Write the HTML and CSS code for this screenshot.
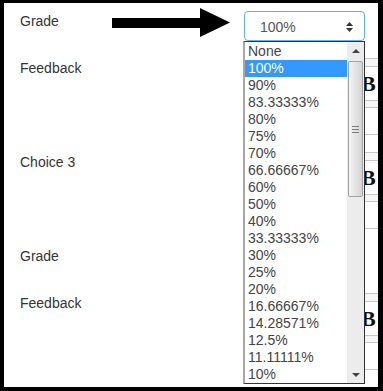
FILE: index.html
```html
<!DOCTYPE html>
<html>
<head>
<meta charset="utf-8">
<link rel="stylesheet" href="styles.css">
</head>
<body>
<div class="frame">
  <div class="form">
    <div class="label">Grade</div>
    <div class="field">
      <div class="select">
        <span class="select-value">100%</span>
        <svg class="updown" width="7" height="10" viewBox="0 0 7 10"><polygon points="0,4 3.5,0 7,4" fill="#333"/><polygon points="0,6 7,6 3.5,10" fill="#333"/></svg>
      </div>
    </div>

    <div class="label">Feedback</div>
    <div class="field">
      <div class="editor">
        <div class="tb-strip"></div>
        <div class="tb-row"><span class="tb-b">B</span></div>
        <div class="tb-strip tb-strip-bottom"></div>
        <div class="ed-body"></div>
      </div>
    </div>

    <div class="label">Choice 3</div>
    <div class="field">
      <div class="editor">
        <div class="tb-strip"></div>
        <div class="tb-row"><span class="tb-b">B</span></div>
        <div class="tb-strip tb-strip-bottom"></div>
        <div class="ed-body"></div>
      </div>
    </div>

    <div class="label">Grade</div>
    <div class="field">
      <div class="select"></div>
    </div>

    <div class="label">Feedback</div>
    <div class="field">
      <div class="editor">
        <div class="tb-strip"></div>
        <div class="tb-row"><span class="tb-b">B</span></div>
        <div class="tb-strip tb-strip-bottom"></div>
        <div class="ed-body"></div>
      </div>
    </div>
  </div>

  <svg class="pointer" width="120" height="30" viewBox="0 0 120 30">
    <rect x="0" y="10" width="89" height="10" fill="#000"/>
    <polygon points="88,0 118,14.5 88,29" fill="#000"/>
  </svg>

  <div class="dropdown">
    <ul class="options">
      <li>None</li>
      <li class="selected">100%</li>
      <li>90%</li>
      <li>83.33333%</li>
      <li>80%</li>
      <li>75%</li>
      <li>70%</li>
      <li>66.66667%</li>
      <li>60%</li>
      <li>50%</li>
      <li>40%</li>
      <li>33.33333%</li>
      <li>30%</li>
      <li>25%</li>
      <li>20%</li>
      <li>16.66667%</li>
      <li>14.28571%</li>
      <li>12.5%</li>
      <li>11.11111%</li>
      <li>10%</li>
    </ul>
    <div class="scrollbar">
      <div class="sb-btn"><span class="tri-up"></span></div>
      <div class="sb-track">
        <div class="sb-thumb">
          <svg width="7" height="7" viewBox="0 0 7 7"><rect x="0" y="0" width="7" height="1" fill="#7a7a7a"/><rect x="0" y="3" width="7" height="1" fill="#7a7a7a"/><rect x="0" y="6" width="7" height="1" fill="#7a7a7a"/></svg>
        </div>
      </div>
      <div class="sb-btn"><span class="tri-down"></span></div>
    </div>
  </div>
</div>
</body>
</html>
```

FILE: styles.css
```css
* { box-sizing: border-box; }
html, body { margin: 0; padding: 0; background: #fff; }

.frame {
  position: relative;
  width: 383px;
  height: 391px;
  border-style: solid;
  border-color: #000;
  border-width: 3px 5px 4px 4px;
  background: #fff;
  overflow: hidden;
  font-family: "Liberation Sans", Arial, sans-serif;
  font-size: 14px;
  color: #333;
}

.form {
  display: grid;
  grid-template-columns: 224px 200px;
  row-gap: 17px;
  padding: 8px 0 0 16px;
}

.label {
  line-height: 20px;
  color: #333;
}

.select {
  width: 121px;
  height: 30px;
  border: 1px solid #66afe9;
  border-radius: 4px;
  display: flex;
  align-items: center;
  justify-content: space-between;
  padding: 0 11px 0 15px;
  color: #555;
  background: #fff;
}
.select-value { line-height: 20px; padding-top: 1px; }
.updown { display: block; margin-top: 1px; }

.editor {
  height: 77px;
  border-top: 1px solid #c8c8c8;
  border-bottom: 1px solid #c8c8c8;
  display: flex;
  flex-direction: column;
}
.tb-strip {
  height: 7px;
  background: #f6f6f6;
}
.tb-row {
  height: 34px;
  border-top: 1px solid #c8c8c8;
  display: flex;
  align-items: center;
}
.tb-b {
  margin-left: 117px;
  font-family: "Liberation Serif", "Times New Roman", serif;
  font-weight: bold;
  font-size: 22px;
  line-height: 24px;
  color: #111;
}
.tb-strip-bottom {
  height: 8px;
  border-top: 1px solid #c8c8c8;
  border-bottom: 1px solid #c8c8c8;
}
.ed-body { flex: 1; background: #fff; }

.pointer {
  position: absolute;
  left: 108px;
  top: 5px;
  display: block;
}

.dropdown {
  position: absolute;
  left: 239px;
  top: 38px;
  width: 122px;
  height: 343px;
  border: 1px solid #333;
  border-left: 2px solid #a8a8a8;
  background: #fff;
  display: flex;
}

.options {
  list-style: none;
  margin: 0;
  padding: 1px 0 0 0;
  width: 102px;
}
.options li {
  height: 17px;
  line-height: 17px;
  padding-left: 3px;
  color: #444;
  white-space: nowrap;
}
.options li.selected {
  background: #3399ff;
  color: #fff;
}

.scrollbar {
  width: 17px;
  display: flex;
  flex-direction: column;
  background: #ececec;
}
.sb-btn {
  height: 17px;
  display: flex;
  align-items: center;
  justify-content: center;
}
.tri-up, .tri-down {
  width: 0;
  height: 0;
  border-left: 4px solid transparent;
  border-right: 4px solid transparent;
}
.tri-up { border-bottom: 4px solid #444; }
.tri-down { border-top: 4px solid #444; }
.sb-track { flex: 1; padding: 2px 1px 0 1px; }
.sb-thumb {
  height: 136px;
  border: 1px solid #a4a4a4;
  border-radius: 2px;
  background: linear-gradient(to right, #f4f4f4 0%, #e6e6e6 45%, #d4d4d4 100%);
  display: flex;
  align-items: center;
  justify-content: center;
}
.sb-thumb svg { display: block; }
```
